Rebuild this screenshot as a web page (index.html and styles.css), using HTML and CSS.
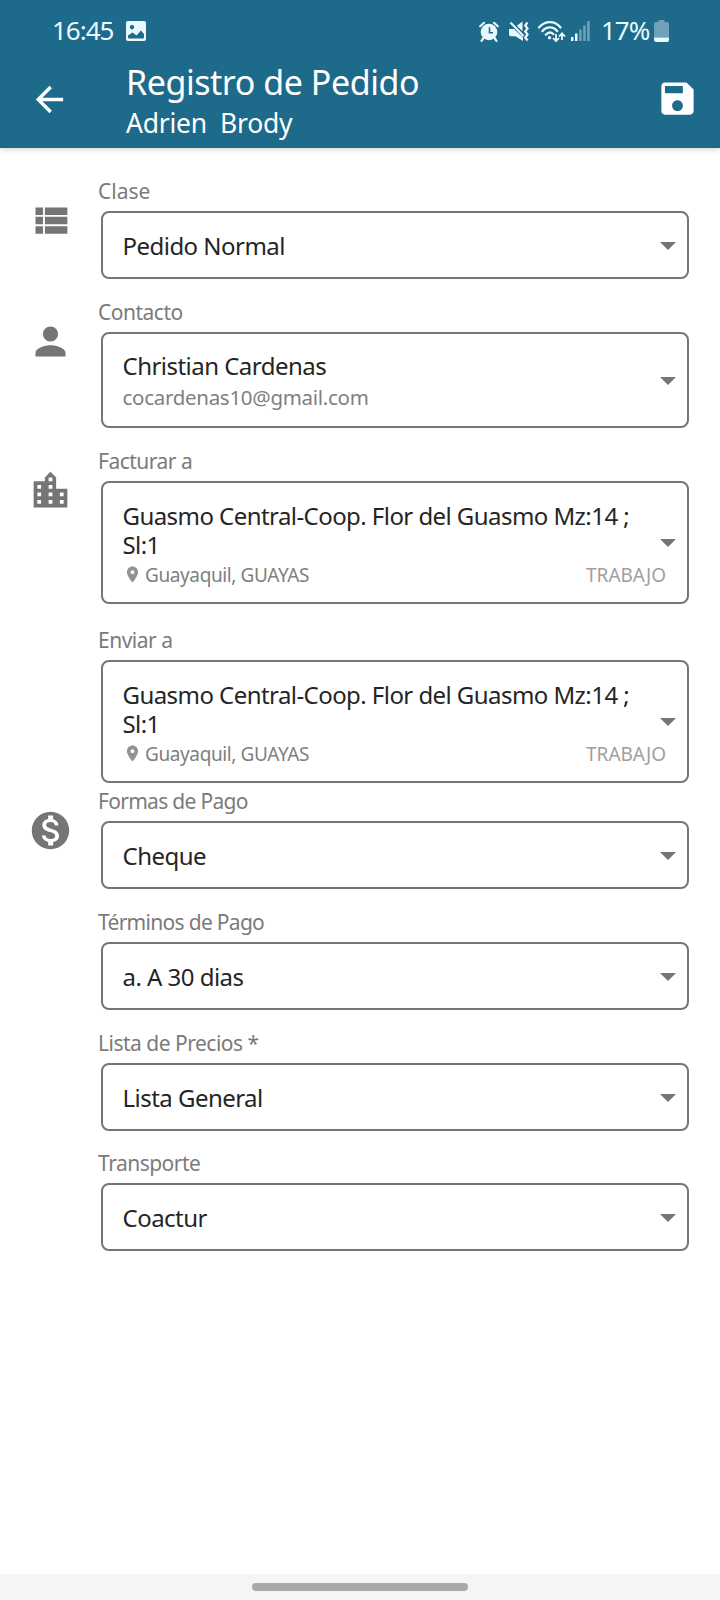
FILE: index.html
```html
<!DOCTYPE html>
<html lang="es">
<head>
<meta charset="utf-8">
<title>Registro de Pedido</title>
<link rel="stylesheet" href="styles.css">
</head>
<body>
<svg class="defs" width="0" height="0">
  <symbol id="pin" viewBox="0 0 24 24"><path d="M12 2C8.13 2 5 5.13 5 9c0 5.25 7 13 7 13s7-7.75 7-13c0-3.87-3.13-7-7-7zm0 9.5a2.5 2.5 0 0 1 0-5 2.5 2.5 0 0 1 0 5z"/></symbol>
</svg>
<header class="header">
  <div class="status">
    <span class="clock">16:45</span>
    <svg class="picture" width="20" height="20" viewBox="0 0 20 20"><path fill="currentColor" fill-rule="evenodd" d="M2 0h16a2 2 0 0 1 2 2v16a2 2 0 0 1-2 2H2a2 2 0 0 1-2-2V2a2 2 0 0 1 2-2zM2 14.5v1.8c0 .8.5 1.2 1.200 1.200h13.600c.8 0 1.200-.4 1.200-1.200v-3.300l-3-3.500-4.500 5-4-3zM6 4a2.200 2.200 0 1 0 .01 0z"/></svg>
    <div class="tray">
      <svg class="alarm" width="20" height="21" viewBox="0 0 20 21"><circle cx="10" cy="11" r="8.300" fill="currentColor"/><path d="M1.200 5.200 5 1.800M18.800 5.200 15 1.800M4.500 17l-2 2.800M15.500 17l2 2.800" stroke="currentColor" stroke-width="2.200" stroke-linecap="round"/><path d="M10.500 6.200v5.500H14" fill="none" stroke="#1d6a8b" stroke-width="1.600"/></svg>
      <svg class="mute" width="20" height="21" viewBox="0 0 20 21"><path fill="currentColor" d="M0 8h5l9 8.500V20l-7.500-4.700H1.200L0 14zM7.800 4.800 13.500.5v9.800z"/><path d="M1.500 1.500 14.500 15" stroke="currentColor" stroke-width="2"/><path d="m18.500 1.500-2.200 3 2.200 3-2.200 3 2.200 3-2.200 3 2.200 3" fill="none" stroke="currentColor" stroke-width="2.200"/></svg>
      <svg class="wifi" width="28" height="21" viewBox="0 0 28 21"><g fill="none" stroke="currentColor" stroke-width="2.200" stroke-linecap="round"><path d="M1 6.500C7-.6 17-.6 22.500 6.500M4.300 10.200c4.400-5 10.800-5 15 0M7.800 13.700c2.400-2.600 5.400-2.600 7.600-.6"/></g><circle cx="11.500" cy="16.700" r="1.700" fill="currentColor"/><path d="M18 13v7m-3-3 3 3.200 3-3.200M24 19v-6.500m-3 3 3-3.200 3 3.200" fill="none" stroke="currentColor" stroke-width="1.800"/></svg>
      <svg class="signal" width="19" height="20" viewBox="0 0 19 20" fill="currentColor"><path d="M0 16h2.500v4H0zM4 12.500h2.500V20H4z"/><path opacity=".4" d="M8.200 8.500h2.500V20H8.200zM12.200 4.500h2.500V20h-2.500zM16.200 0h2.500v20h-2.500z"/></svg>
      <span class="charge">17%</span>
      <svg class="battery" width="15" height="22" viewBox="0 0 15 22" fill="currentColor"><path opacity=".4" d="M4.500 0h6v2H13a2 2 0 0 1 2 2v13.500H0V4a2 2 0 0 1 2-2h2.500z"/><path d="M0 17.500h15V20a2 2 0 0 1-2 2H2a2 2 0 0 1-2-2z"/></svg>
    </div>
  </div>
  <div class="appbar">
    <svg class="back" width="41" height="41" viewBox="0 0 24 24"><path fill="currentColor" d="M20 11H7.830l5.590-5.590L12 4l-8 8 8 8 1.410-1.410L7.830 13H20v-2z"/></svg>
    <div class="titles">
      <h1 class="title">Registro de Pedido</h1>
      <p class="subtitle">Adrien&nbsp; Brody</p>
    </div>
    <svg class="save" width="43" height="43" viewBox="0 0 24 24"><path fill="currentColor" d="M17 3H5c-1.110 0-2 .9-2 2v14c0 1.100.89 2 2 2h14c1.100 0 2-.9 2-2V7l-4-4zm-5 16c-1.660 0-3-1.340-3-3s1.340-3 3-3 3 1.340 3 3-1.340 3-3 3zm3-10H5V5h10v4z"/></svg>
  </div>
</header>
<main class="form">
  <section class="field">
    <svg class="icon" viewBox="0 0 24 24"><path d="M4 14h4v-4H4v4zm0 5h4v-4H4v4zM4 9h4V5H4v4zm5 5h12v-4H9v4zm0 5h12v-4H9v4zM9 5v4h12V5H9z"/></svg>
    <div class="control">
      <label class="label short">Clase</label>
      <div class="select"><p class="value">Pedido Normal</p></div>
    </div>
  </section>
  <section class="field">
    <svg class="icon" viewBox="0 0 24 24"><path d="M12 12c2.210 0 4-1.790 4-4s-1.790-4-4-4-4 1.790-4 4 1.790 4 4 4zm0 2c-2.670 0-8 1.340-8 4v2h16v-2c0-2.660-5.330-4-8-4z"/></svg>
    <div class="control">
      <label class="label">Contacto</label>
      <div class="select contact"><p class="value">Christian Cardenas</p><p class="email">cocardenas10@gmail.com</p></div>
    </div>
  </section>
  <section class="field bill">
    <svg class="icon" viewBox="0 0 24 24"><path d="M15 11V5l-3-3-3 3v2H3v14h18V11h-6zm-8 8H5v-2h2v2zm0-4H5v-2h2v2zm0-4H5V9h2v2zm6 8h-2v-2h2v2zm0-4h-2v-2h2v2zm0-4h-2V9h2v2zm0-4h-2V5h2v2zm6 12h-2v-2h2v2zm0-4h-2v-2h2v2z"/></svg>
    <div class="control">
      <label class="label">Facturar a</label>
      <div class="select address"><p class="value">Guasmo Central-Coop. Flor del Guasmo Mz:14 ;<br>Sl:1</p>
        <div class="place"><svg class="pin"><use href="#pin"/></svg><span class="city">Guayaquil, GUAYAS</span><span class="kind">TRABAJO</span></div></div>
    </div>
  </section>
  <section class="field ship">
    <div class="icon"></div>
    <div class="control">
      <label class="label">Enviar a</label>
      <div class="select address"><p class="value">Guasmo Central-Coop. Flor del Guasmo Mz:14 ;<br>Sl:1</p>
        <div class="place"><svg class="pin"><use href="#pin"/></svg><span class="city">Guayaquil, GUAYAS</span><span class="kind">TRABAJO</span></div></div>
    </div>
  </section>
  <section class="field">
    <svg class="icon" viewBox="0 0 24 24"><path d="M12 2C6.480 2 2 6.480 2 12s4.480 10 10 10 10-4.480 10-10S17.520 2 12 2zm1.410 16.090V20h-2.670v-1.930c-1.710-.36-3.160-1.460-3.270-3.400h1.960c.1 1.050.82 1.870 2.650 1.870 1.960 0 2.400-.98 2.400-1.590 0-.83-.44-1.610-2.670-2.140-2.480-.6-4.180-1.620-4.180-3.670 0-1.720 1.390-2.840 3.110-3.210V4h2.670v1.950c1.860.45 2.790 1.860 2.850 3.390H14.300c-.05-1.110-.64-1.870-2.220-1.870-1.500 0-2.400.68-2.400 1.640 0 .84.65 1.390 2.670 1.910s4.180 1.390 4.180 3.910c-.01 1.830-1.380 2.830-3.120 3.160z"/></svg>
    <div class="control">
      <label class="label long">Formas de Pago</label>
      <div class="select"><p class="value">Cheque</p></div>
    </div>
  </section>
  <section class="field">
    <div class="icon"></div>
    <div class="control">
      <label class="label long">Términos de Pago</label>
      <div class="select"><p class="value">a. A 30 dias</p></div>
    </div>
  </section>
  <section class="field prices">
    <div class="icon"></div>
    <div class="control">
      <label class="label">Lista de Precios *</label>
      <div class="select"><p class="value">Lista General</p></div>
    </div>
  </section>
  <section class="field">
    <div class="icon"></div>
    <div class="control">
      <label class="label">Transporte</label>
      <div class="select"><p class="value">Coactur</p></div>
    </div>
  </section>
</main>
<footer class="navbar"><div class="handle"></div></footer>
</body>
</html>
```
FILE: styles.css
```css
* { box-sizing: border-box; }
body {
  margin: 0;
  height: 1600px;
  display: flex;
  flex-direction: column;
  overflow: hidden;
  background: #fff;
  font-family: "Noto Sans", "Open Sans", sans-serif;
  white-space: nowrap;
}
h1, p { margin: 0; font-weight: 400; }
svg { display: block; flex: none; }
.defs { position: absolute; }

.header {
  height: 148px;
  flex: none;
  background: #1d6a8b;
  color: #fff;
  box-shadow: 0 1px 6px rgba(0, 0, 0, .2);
}
.status {
  height: 62px;
  padding: 0 51px 0 52px;
  display: flex;
  align-items: center;
  color: #eaf8ff;
  font-size: 26px;
}
.clock { width: 74px; letter-spacing: -1px; line-height: 40px; padding-bottom: 2px; }
.tray { margin-left: auto; display: flex; align-items: center; }
.mute { margin-left: 10px; }
.wifi { margin-left: 9px; }
.signal { margin-left: 5px; }
.charge { width: 53px; margin-left: 11px; letter-spacing: -1px; line-height: 40px; padding-bottom: 2px; }

.appbar { display: flex; height: 86px; padding-right: 21px; }
.back { margin: 17px 0 0 29px; }
.titles { flex: 1; padding-left: 56px; }
.title { font-size: 34px; line-height: 40px; letter-spacing: -.45px; }
.subtitle { margin-top: 1px; font-size: 26.500px; line-height: 40px; letter-spacing: -.25px; }
.save { margin-top: 15px; }

.form { flex: 1; padding: 29px 31px 0 27.500px; color: #252525; }
.field { display: flex; padding-bottom: 19px; }
.field.bill { padding-bottom: 22px; }
.field.ship { padding-bottom: 4px; }
.field.prices { padding-bottom: 18px; }
.icon { width: 45px; height: 45px; flex: none; margin-top: 20.500px; fill: #757575; }
.control { flex: 1; padding-left: 25.500px; }
.label { display: block; height: 34px; line-height: 28px; font-size: 21px; letter-spacing: -.5px; color: #7b7b7b; }
.label.short { letter-spacing: 0; }
.label.long { letter-spacing: -.7px; }
.select {
  position: relative;
  height: 68px;
  margin-left: 3px;
  padding: 19px 21px 0 19.500px;
  border: 2px solid #757575;
  border-radius: 8px;
}
.select::after {
  content: "";
  position: absolute;
  right: 11.500px;
  top: calc(50% - 3px);
  border: 8px solid transparent;
  border-top-color: #757575;
  border-bottom: 0;
}
.contact { height: 96px; padding-top: 18px; }
.address { height: 123px; }
.address::after { top: calc(50% - 4px); }
.value { font-size: 24px; line-height: 28.500px; letter-spacing: -.53px; }
.address .value { letter-spacing: -.56px; }
.email { margin-top: 2px; font-size: 20.500px; line-height: 28px; letter-spacing: -.29px; color: #808080; }
.place { display: flex; margin-top: 1.500px; line-height: 28px; font-size: 19px; color: #808080; }
.pin { width: 19px; height: 19px; margin-top: 4px; fill: #929292; }
.city { margin-left: 3.500px; letter-spacing: -.39px; }
.kind { margin-left: auto; color: #a0a0a0; }

.navbar { flex: none; height: 26px; padding-top: 9px; background: #f5f5f5; }
.handle { width: 216px; height: 8px; margin: 0 auto; border-radius: 4px; background: #a9a9a9; }
```
